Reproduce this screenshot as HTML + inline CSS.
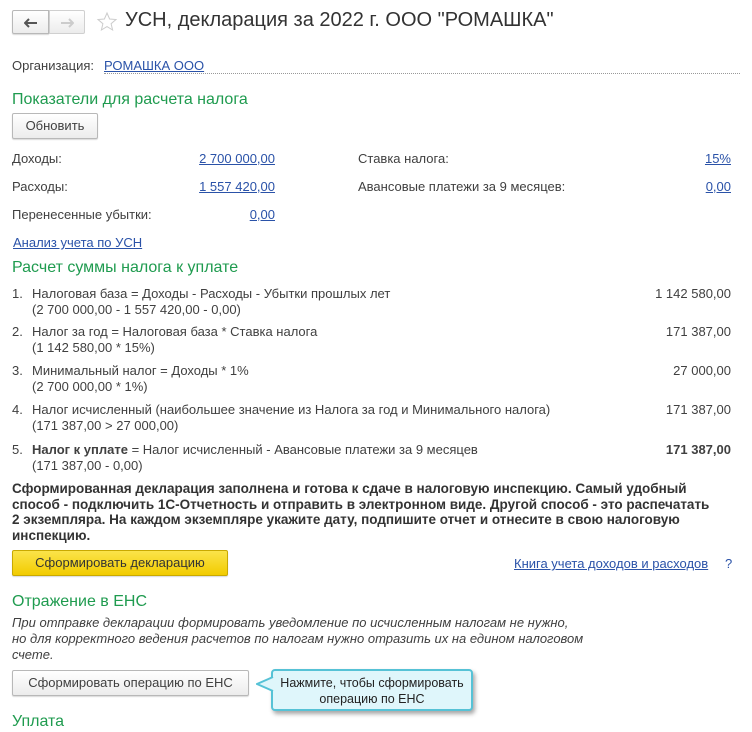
<!DOCTYPE html>
<html><head><meta charset="utf-8"><style>
*{margin:0;padding:0;box-sizing:border-box}
body{width:752px;height:732px;background:#fff;font-family:"Liberation Sans",Arial,sans-serif;font-size:13px;color:#404040;position:relative;overflow:hidden}
.a{position:absolute;white-space:nowrap;line-height:15.5px}
.l{color:#2a52a8;text-decoration:underline}
.g{color:#1f9b4f;font-size:16px;line-height:18px}
.btn{position:absolute;white-space:nowrap;border:1px solid #b8b8b8;border-radius:2px;background:linear-gradient(#fff,#ececec);box-shadow:0 1px 1px rgba(0,0,0,.15);text-align:center;line-height:24px;font-size:13px;color:#404040}
.r{text-align:right}
</style></head><body>
<div class="btn" style="left:12px;top:10px;width:37px;height:24px;border-radius:2px 0 0 2px"><svg width="14" height="10" style="margin-top:7px"><path d="M1 5h12M5 1L1 5l4 4" stroke="#555" stroke-width="2" fill="none"/></svg></div>
<div class="btn" style="left:49px;top:10px;width:36px;height:24px;border-radius:0 2px 2px 0;box-shadow:none;border-color:#d0d0d0"><svg width="14" height="10" style="margin-top:7px"><path d="M1 5h12M9 1l4 4-4 4" stroke="#ccc" stroke-width="2" fill="none"/></svg></div>
<svg class="a" style="left:96px;top:11px" width="22" height="22"><path d="M11 2l2.6 6 6.4.5-4.9 4.2 1.5 6.3L11 15.6 5.4 19l1.5-6.3L2 8.5 8.4 8z" fill="none" stroke="#ccc"/></svg>
<div class="a" style="left:125px;top:8px;font-size:20px;line-height:24px;color:#333">УСН, декларация за 2022 г. ООО "РОМАШКА"</div>
<div class="a" style="left:12px;top:58px">Организация:</div>
<div class="a" style="left:104px;top:58px;width:636px;height:16px;border-bottom:1px dotted #999"><span class="l">РОМАШКА ООО</span></div>
<div class="a g" style="left:12px;top:91px">Показатели для расчета налога</div>
<div class="btn" style="left:12px;top:113px;width:86px;height:26px">Обновить</div>
<div class="a" style="left:12px;top:151px">Доходы:</div>
<div class="a r l" style="left:155px;width:120px;top:151px">2 700 000,00</div>
<div class="a" style="left:12px;top:179px">Расходы:</div>
<div class="a r l" style="left:155px;width:120px;top:179px">1 557 420,00</div>
<div class="a" style="left:12px;top:207px">Перенесенные убытки:</div>
<div class="a r l" style="left:155px;width:120px;top:207px">0,00</div>
<div class="a" style="left:358px;top:151px">Ставка налога:</div>
<div class="a r l" style="left:611px;width:120px;top:151px">15%</div>
<div class="a" style="left:358px;top:179px">Авансовые платежи за 9 месяцев:</div>
<div class="a r l" style="left:611px;width:120px;top:179px">0,00</div>
<div class="a l" style="left:13px;top:235px">Анализ учета по УСН</div>
<div class="a g" style="left:12px;top:259px">Расчет суммы налога к уплате</div>
<div class="a" style="left:12px;top:286px">1.</div><div class="a" style="left:32px;top:286px">Налоговая база = Доходы - Расходы - Убытки прошлых лет<br>(2 700 000,00 - 1 557 420,00 - 0,00)</div><div class="a r" style="left:531px;width:200px;top:286px">1 142 580,00</div>
<div class="a" style="left:12px;top:324px">2.</div><div class="a" style="left:32px;top:324px">Налог за год = Налоговая база * Ставка налога<br>(1 142 580,00 * 15%)</div><div class="a r" style="left:531px;width:200px;top:324px">171 387,00</div>
<div class="a" style="left:12px;top:363px">3.</div><div class="a" style="left:32px;top:363px">Минимальный налог = Доходы * 1%<br>(2 700 000,00 * 1%)</div><div class="a r" style="left:531px;width:200px;top:363px">27 000,00</div>
<div class="a" style="left:12px;top:402px">4.</div><div class="a" style="left:32px;top:402px">Налог исчисленный (наибольшее значение из Налога за год и Минимального налога)<br>(171 387,00 &gt; 27 000,00)</div><div class="a r" style="left:531px;width:200px;top:402px">171 387,00</div>
<div class="a" style="left:12px;top:442px">5.</div><div class="a" style="left:32px;top:442px"><b>Налог к уплате</b> = Налог исчисленный - Авансовые платежи за 9 месяцев<br>(171 387,00 - 0,00)</div><div class="a r" style="left:531px;width:200px;top:442px"><b>171 387,00</b></div>
<div class="a" style="left:12px;top:481px;font-weight:bold;color:#333;line-height:15.5px;font-size:13.5px">Сформированная декларация заполнена и готова к сдаче в налоговую инспекцию. Самый удобный<br>способ - подключить 1С-Отчетность и отправить в электронном виде. Другой способ - это распечатать<br>2 экземпляра. На каждом экземпляре укажите дату, подпишите отчет и отнесите в свою налоговую<br>инспекцию.</div>
<div class="btn" style="left:12px;top:550px;width:216px;height:26px;background:linear-gradient(#fbe44a,#f2cc00);border-color:#c9a900;color:#333">Сформировать декларацию</div>
<div class="a l" style="left:514px;top:556px">Книга учета доходов и расходов</div>
<div class="a" style="left:725px;top:556px;color:#2a52a8">?</div>
<div class="a g" style="left:12px;top:593px">Отражение в ЕНС</div>
<div class="a" style="left:12px;top:615px;font-style:italic;line-height:16px">При отправке декларации формировать уведомление по исчисленным налогам не нужно,<br>но для корректного ведения расчетов по налогам нужно отразить их на едином налоговом<br>счете.</div>
<div class="btn" style="left:12px;top:670px;width:237px;height:26px">Сформировать операцию по ЕНС</div>
<div style="position:absolute;left:271px;top:669px;width:202px;height:42px;background:#dff6fb;border:2px solid #56c2d6;border-radius:4px;box-shadow:2px 3px 4px rgba(0,0,0,.35);text-align:center;line-height:16px;padding-top:4px;color:#222;white-space:nowrap;font-size:12.5px">Нажмите, чтобы сформировать<br>операцию по ЕНС</div>
<svg style="position:absolute;left:256px;top:676px" width="18" height="16"><path d="M17 1L1 8l16 7" fill="#dff6fb" stroke="#56c2d6" stroke-width="2"/></svg>
<div class="a g" style="left:12px;top:713px">Уплата</div>
</body></html>
